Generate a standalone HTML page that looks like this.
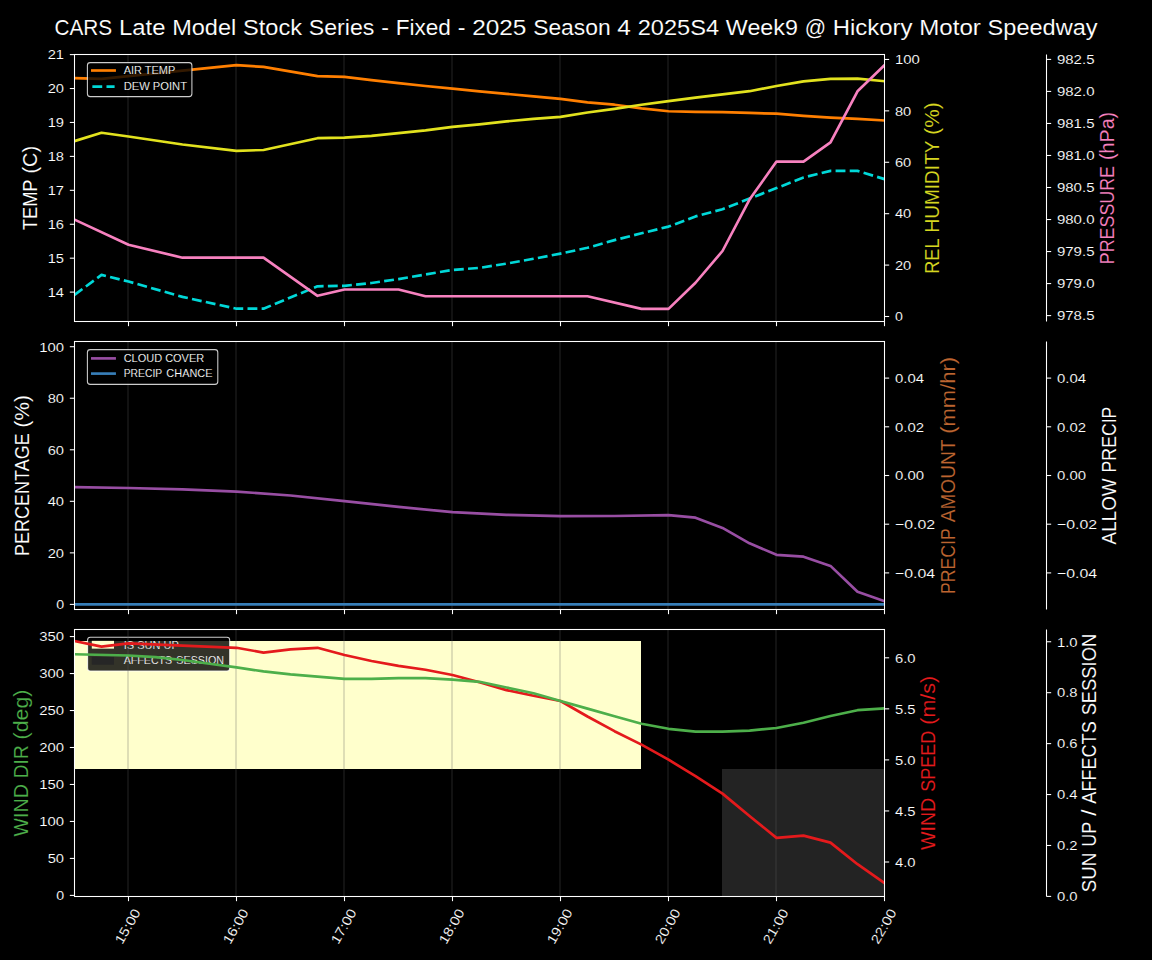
<!DOCTYPE html>
<html><head><meta charset="utf-8"><title>CARS Weather</title>
<style>html,body{margin:0;padding:0;background:#000;width:1152px;height:960px;overflow:hidden;font-family:"Liberation Sans", sans-serif;}</style>
</head><body>
<svg width="1152" height="960" viewBox="0 0 1152 960" style="display:block;font-family:'Liberation Sans', sans-serif">
<rect x="0" y="0" width="1152" height="960" fill="#000"/>
<defs><clipPath id="c1"><rect x="74.5" y="54.5" width="810.0" height="267.0"/></clipPath><clipPath id="c2"><rect x="74.5" y="341.5" width="810.0" height="268.0"/></clipPath><clipPath id="c3"><rect x="74.5" y="629.5" width="810.0" height="267.0"/></clipPath></defs>
<text x="54.39" y="35.30" font-size="22.61" fill="#ffffff" textLength="57.82" lengthAdjust="spacingAndGlyphs" stroke="#000" stroke-width="0.12">CARS</text>
<text x="119.00" y="35.30" font-size="22.61" fill="#ffffff" textLength="46.44" lengthAdjust="spacingAndGlyphs" stroke="#000" stroke-width="0.12">Late</text>
<text x="172.21" y="35.30" font-size="22.61" fill="#ffffff" textLength="64.03" lengthAdjust="spacingAndGlyphs" stroke="#000" stroke-width="0.12">Model</text>
<text x="243.01" y="35.30" font-size="22.61" fill="#ffffff" textLength="58.97" lengthAdjust="spacingAndGlyphs" stroke="#000" stroke-width="0.12">Stock</text>
<text x="308.81" y="35.30" font-size="22.61" fill="#ffffff" textLength="65.58" lengthAdjust="spacingAndGlyphs" stroke="#000" stroke-width="0.12">Series</text>
<text x="381.17" y="35.30" font-size="22.61" fill="#ffffff" textLength="7.70" lengthAdjust="spacingAndGlyphs" stroke="#000" stroke-width="0.12">-</text>
<text x="395.64" y="35.30" font-size="22.61" fill="#ffffff" textLength="55.24" lengthAdjust="spacingAndGlyphs" stroke="#000" stroke-width="0.12">Fixed</text>
<text x="457.68" y="35.30" font-size="22.61" fill="#ffffff" textLength="7.70" lengthAdjust="spacingAndGlyphs" stroke="#000" stroke-width="0.12">-</text>
<text x="472.15" y="35.30" font-size="22.61" fill="#ffffff" textLength="54.28" lengthAdjust="spacingAndGlyphs" stroke="#000" stroke-width="0.12">2025</text>
<text x="533.20" y="35.30" font-size="22.61" fill="#ffffff" textLength="77.40" lengthAdjust="spacingAndGlyphs" stroke="#000" stroke-width="0.12">Season</text>
<text x="617.37" y="35.30" font-size="22.61" fill="#ffffff" textLength="13.57" lengthAdjust="spacingAndGlyphs" stroke="#000" stroke-width="0.12">4</text>
<text x="637.72" y="35.30" font-size="22.61" fill="#ffffff" textLength="81.37" lengthAdjust="spacingAndGlyphs" stroke="#000" stroke-width="0.12">2025S4</text>
<text x="725.87" y="35.30" font-size="22.61" fill="#ffffff" textLength="72.01" lengthAdjust="spacingAndGlyphs" stroke="#000" stroke-width="0.12">Week9</text>
<text x="804.64" y="35.30" font-size="22.61" fill="#ffffff" textLength="21.32" lengthAdjust="spacingAndGlyphs" stroke="#000" stroke-width="0.12">@</text>
<text x="832.75" y="35.30" font-size="22.61" fill="#ffffff" textLength="79.69" lengthAdjust="spacingAndGlyphs" stroke="#000" stroke-width="0.12">Hickory</text>
<text x="919.23" y="35.30" font-size="22.61" fill="#ffffff" textLength="61.62" lengthAdjust="spacingAndGlyphs" stroke="#000" stroke-width="0.12">Motor</text>
<text x="987.63" y="35.30" font-size="22.61" fill="#ffffff" textLength="109.97" lengthAdjust="spacingAndGlyphs" stroke="#000" stroke-width="0.12">Speedway</text>
<line x1="128.00" y1="54.5" x2="128.00" y2="321.5" stroke="#5a5a5a" stroke-opacity="0.2" stroke-width="2"/>
<line x1="236.00" y1="54.5" x2="236.00" y2="321.5" stroke="#5a5a5a" stroke-opacity="0.2" stroke-width="2"/>
<line x1="344.00" y1="54.5" x2="344.00" y2="321.5" stroke="#5a5a5a" stroke-opacity="0.2" stroke-width="2"/>
<line x1="452.00" y1="54.5" x2="452.00" y2="321.5" stroke="#5a5a5a" stroke-opacity="0.2" stroke-width="2"/>
<line x1="560.00" y1="54.5" x2="560.00" y2="321.5" stroke="#5a5a5a" stroke-opacity="0.2" stroke-width="2"/>
<line x1="668.00" y1="54.5" x2="668.00" y2="321.5" stroke="#5a5a5a" stroke-opacity="0.2" stroke-width="2"/>
<line x1="776.00" y1="54.5" x2="776.00" y2="321.5" stroke="#5a5a5a" stroke-opacity="0.2" stroke-width="2"/>
<g clip-path="url(#c1)">
<polyline points="74.50,78.07 101.50,78.93 236.50,65.18 263.50,66.90 317.50,76.07 344.50,76.90 371.50,80.20 398.50,83.20 425.50,86.00 452.50,88.60 479.50,91.40 506.50,93.90 533.50,96.30 560.50,98.90 587.50,102.40 614.50,104.70 641.50,108.40 668.50,111.25 695.50,111.80 722.50,112.20 749.50,112.95 776.50,113.70 803.50,115.90 830.50,117.60 857.50,118.90 884.50,120.50" fill="none" stroke="#ff7f00" stroke-width="2.67" stroke-linejoin="round" stroke-linecap="square" opacity="1.0"/>
</g>
<g clip-path="url(#c1)">
<polyline points="74.50,294.90 101.50,274.90 128.50,281.50 182.50,296.90 236.50,308.70 263.50,308.70 317.50,286.30 344.50,285.80 371.50,283.00 398.50,279.10 425.50,274.50 452.50,269.90 479.50,267.90 506.50,263.60 533.50,258.80 560.50,253.60 587.50,247.80 614.50,240.10 641.50,233.30 668.50,226.60 695.50,216.40 722.50,209.20 749.50,198.60 776.50,188.10 803.50,177.50 830.50,170.90 857.50,170.90 884.50,179.10" fill="none" stroke="#00d8d8" stroke-width="2.67" stroke-linejoin="round" stroke-linecap="butt" stroke-dasharray="9.87 4.27" opacity="1.0"/>
</g>
<g clip-path="url(#c1)">
<polyline points="74.50,141.10 101.50,132.80 128.50,136.50 182.50,144.50 236.50,150.80 263.50,150.00 317.50,138.20 344.50,137.70 371.50,135.80 398.50,133.20 425.50,130.40 452.50,126.90 479.50,124.40 506.50,121.40 533.50,118.80 560.50,116.85 587.50,112.55 614.50,108.90 641.50,104.70 668.50,101.10 695.50,97.60 722.50,94.30 749.50,91.20 776.50,86.00 803.50,81.40 830.50,78.80 857.50,78.60 884.50,81.20" fill="none" stroke="#e2e21e" stroke-width="2.67" stroke-linejoin="round" stroke-linecap="square" opacity="1.0"/>
</g>
<g clip-path="url(#c1)">
<polyline points="74.50,219.60 128.50,244.80 182.50,257.70 263.50,257.70 317.50,295.80 344.50,289.50 398.50,289.50 425.50,296.25 587.50,296.25 641.50,308.90 668.50,308.90 695.50,282.75 722.50,251.00 749.50,199.60 776.50,161.60 803.50,161.60 830.50,142.30 857.50,91.30 884.50,65.20" fill="none" stroke="#f781bf" stroke-width="2.67" stroke-linejoin="round" stroke-linecap="square" opacity="1.0"/>
</g>
<rect x="74.5" y="54.5" width="810.0" height="267.0" fill="none" stroke="#fff" stroke-width="1.07"/>
<line x1="1046.5" y1="54.5" x2="1046.5" y2="321.5" stroke="#fff" stroke-width="1.07"/>
<line x1="128.5" y1="321.5" x2="128.5" y2="326.17" stroke="#fff" stroke-width="1.07"/>
<line x1="236.5" y1="321.5" x2="236.5" y2="326.17" stroke="#fff" stroke-width="1.07"/>
<line x1="344.5" y1="321.5" x2="344.5" y2="326.17" stroke="#fff" stroke-width="1.07"/>
<line x1="452.5" y1="321.5" x2="452.5" y2="326.17" stroke="#fff" stroke-width="1.07"/>
<line x1="560.5" y1="321.5" x2="560.5" y2="326.17" stroke="#fff" stroke-width="1.07"/>
<line x1="668.5" y1="321.5" x2="668.5" y2="326.17" stroke="#fff" stroke-width="1.07"/>
<line x1="776.5" y1="321.5" x2="776.5" y2="326.17" stroke="#fff" stroke-width="1.07"/>
<line x1="884.5" y1="321.5" x2="884.5" y2="326.17" stroke="#fff" stroke-width="1.07"/>
<line x1="69.83" y1="292.11" x2="74.5" y2="292.11" stroke="#fff" stroke-width="1.07"/>
<text x="47.70" y="296.91" font-size="13.33" fill="#ffffff" textLength="16.35" lengthAdjust="spacingAndGlyphs" stroke="#000" stroke-width="0.12">14</text>
<line x1="69.83" y1="258.18" x2="74.5" y2="258.18" stroke="#fff" stroke-width="1.07"/>
<text x="47.70" y="262.98" font-size="13.33" fill="#ffffff" textLength="16.35" lengthAdjust="spacingAndGlyphs" stroke="#000" stroke-width="0.12">15</text>
<line x1="69.83" y1="224.25" x2="74.5" y2="224.25" stroke="#fff" stroke-width="1.07"/>
<text x="47.70" y="229.05" font-size="13.33" fill="#ffffff" textLength="16.35" lengthAdjust="spacingAndGlyphs" stroke="#000" stroke-width="0.12">16</text>
<line x1="69.83" y1="190.32" x2="74.5" y2="190.32" stroke="#fff" stroke-width="1.07"/>
<text x="47.70" y="195.12" font-size="13.33" fill="#ffffff" textLength="16.35" lengthAdjust="spacingAndGlyphs" stroke="#000" stroke-width="0.12">17</text>
<line x1="69.83" y1="156.39" x2="74.5" y2="156.39" stroke="#fff" stroke-width="1.07"/>
<text x="47.70" y="161.19" font-size="13.33" fill="#ffffff" textLength="16.35" lengthAdjust="spacingAndGlyphs" stroke="#000" stroke-width="0.12">18</text>
<line x1="69.83" y1="122.46" x2="74.5" y2="122.46" stroke="#fff" stroke-width="1.07"/>
<text x="47.70" y="127.26" font-size="13.33" fill="#ffffff" textLength="16.35" lengthAdjust="spacingAndGlyphs" stroke="#000" stroke-width="0.12">19</text>
<line x1="69.83" y1="88.53" x2="74.5" y2="88.53" stroke="#fff" stroke-width="1.07"/>
<text x="47.70" y="93.33" font-size="13.33" fill="#ffffff" textLength="16.35" lengthAdjust="spacingAndGlyphs" stroke="#000" stroke-width="0.12">20</text>
<line x1="69.83" y1="54.60" x2="74.5" y2="54.60" stroke="#fff" stroke-width="1.07"/>
<text x="47.70" y="59.40" font-size="13.33" fill="#ffffff" textLength="16.35" lengthAdjust="spacingAndGlyphs" stroke="#000" stroke-width="0.12">21</text>
<line x1="884.5" y1="316.50" x2="889.17" y2="316.50" stroke="#fff" stroke-width="1.07"/>
<text x="894.94" y="321.30" font-size="13.33" fill="#ffffff" textLength="7.89" lengthAdjust="spacingAndGlyphs" stroke="#000" stroke-width="0.12">0</text>
<line x1="884.5" y1="265.09" x2="889.17" y2="265.09" stroke="#fff" stroke-width="1.07"/>
<text x="894.94" y="269.89" font-size="13.33" fill="#ffffff" textLength="16.35" lengthAdjust="spacingAndGlyphs" stroke="#000" stroke-width="0.12">20</text>
<line x1="884.5" y1="213.68" x2="889.17" y2="213.68" stroke="#fff" stroke-width="1.07"/>
<text x="894.94" y="218.48" font-size="13.33" fill="#ffffff" textLength="16.35" lengthAdjust="spacingAndGlyphs" stroke="#000" stroke-width="0.12">40</text>
<line x1="884.5" y1="162.27" x2="889.17" y2="162.27" stroke="#fff" stroke-width="1.07"/>
<text x="894.94" y="167.07" font-size="13.33" fill="#ffffff" textLength="16.35" lengthAdjust="spacingAndGlyphs" stroke="#000" stroke-width="0.12">60</text>
<line x1="884.5" y1="110.86" x2="889.17" y2="110.86" stroke="#fff" stroke-width="1.07"/>
<text x="894.94" y="115.66" font-size="13.33" fill="#ffffff" textLength="16.35" lengthAdjust="spacingAndGlyphs" stroke="#000" stroke-width="0.12">80</text>
<line x1="884.5" y1="59.45" x2="889.17" y2="59.45" stroke="#fff" stroke-width="1.07"/>
<text x="894.94" y="64.25" font-size="13.33" fill="#ffffff" textLength="24.83" lengthAdjust="spacingAndGlyphs" stroke="#000" stroke-width="0.12">100</text>
<line x1="1046.5" y1="315.60" x2="1051.17" y2="315.60" stroke="#fff" stroke-width="1.07"/>
<text x="1056.94" y="320.40" font-size="13.33" fill="#ffffff" textLength="37.54" lengthAdjust="spacingAndGlyphs" stroke="#000" stroke-width="0.12">978.5</text>
<line x1="1046.5" y1="283.57" x2="1051.17" y2="283.57" stroke="#fff" stroke-width="1.07"/>
<text x="1056.94" y="288.38" font-size="13.33" fill="#ffffff" textLength="37.54" lengthAdjust="spacingAndGlyphs" stroke="#000" stroke-width="0.12">979.0</text>
<line x1="1046.5" y1="251.55" x2="1051.17" y2="251.55" stroke="#fff" stroke-width="1.07"/>
<text x="1056.94" y="256.35" font-size="13.33" fill="#ffffff" textLength="37.54" lengthAdjust="spacingAndGlyphs" stroke="#000" stroke-width="0.12">979.5</text>
<line x1="1046.5" y1="219.53" x2="1051.17" y2="219.53" stroke="#fff" stroke-width="1.07"/>
<text x="1056.94" y="224.33" font-size="13.33" fill="#ffffff" textLength="37.54" lengthAdjust="spacingAndGlyphs" stroke="#000" stroke-width="0.12">980.0</text>
<line x1="1046.5" y1="187.50" x2="1051.17" y2="187.50" stroke="#fff" stroke-width="1.07"/>
<text x="1056.94" y="192.30" font-size="13.33" fill="#ffffff" textLength="37.54" lengthAdjust="spacingAndGlyphs" stroke="#000" stroke-width="0.12">980.5</text>
<line x1="1046.5" y1="155.47" x2="1051.17" y2="155.47" stroke="#fff" stroke-width="1.07"/>
<text x="1056.94" y="160.28" font-size="13.33" fill="#ffffff" textLength="37.54" lengthAdjust="spacingAndGlyphs" stroke="#000" stroke-width="0.12">981.0</text>
<line x1="1046.5" y1="123.45" x2="1051.17" y2="123.45" stroke="#fff" stroke-width="1.07"/>
<text x="1056.94" y="128.25" font-size="13.33" fill="#ffffff" textLength="37.54" lengthAdjust="spacingAndGlyphs" stroke="#000" stroke-width="0.12">981.5</text>
<line x1="1046.5" y1="91.42" x2="1051.17" y2="91.42" stroke="#fff" stroke-width="1.07"/>
<text x="1056.94" y="96.22" font-size="13.33" fill="#ffffff" textLength="37.54" lengthAdjust="spacingAndGlyphs" stroke="#000" stroke-width="0.12">982.0</text>
<line x1="1046.5" y1="59.40" x2="1051.17" y2="59.40" stroke="#fff" stroke-width="1.07"/>
<text x="1056.94" y="64.20" font-size="13.33" fill="#ffffff" textLength="37.54" lengthAdjust="spacingAndGlyphs" stroke="#000" stroke-width="0.12">982.5</text>
<text x="-42.14" y="0.00" font-size="19.79" fill="#ffffff" textLength="50.65" lengthAdjust="spacingAndGlyphs" stroke="#000" stroke-width="0.12" transform="translate(36.90,188.00) rotate(-90)">TEMP</text>
<text x="14.45" y="0.00" font-size="19.79" fill="#ffffff" textLength="27.61" lengthAdjust="spacingAndGlyphs" stroke="#000" stroke-width="0.12" transform="translate(36.90,188.00) rotate(-90)">(C)</text>
<text x="-85.70" y="0.00" font-size="19.79" fill="#d6d620" textLength="35.17" lengthAdjust="spacingAndGlyphs" stroke="#000" stroke-width="0.12" transform="translate(939.00,188.00) rotate(-90)">REL</text>
<text x="-44.59" y="0.00" font-size="19.79" fill="#d6d620" textLength="92.07" lengthAdjust="spacingAndGlyphs" stroke="#000" stroke-width="0.12" transform="translate(939.00,188.00) rotate(-90)">HUMIDITY</text>
<text x="53.38" y="0.00" font-size="19.79" fill="#d6d620" textLength="32.32" lengthAdjust="spacingAndGlyphs" stroke="#000" stroke-width="0.12" transform="translate(939.00,188.00) rotate(-90)">(%)</text>
<text x="-76.20" y="0.00" font-size="19.79" fill="#f781bf" textLength="98.20" lengthAdjust="spacingAndGlyphs" stroke="#000" stroke-width="0.12" transform="translate(1114.00,188.00) rotate(-90)">PRESSURE</text>
<text x="27.93" y="0.00" font-size="19.79" fill="#f781bf" textLength="48.27" lengthAdjust="spacingAndGlyphs" stroke="#000" stroke-width="0.12" transform="translate(1114.00,188.00) rotate(-90)">(hPa)</text>
<rect x="87.4" y="62.6" width="104.50" height="34.00" rx="2.8" ry="2.8" fill="#000" fill-opacity="0.8" stroke="#fff" stroke-opacity="0.8" stroke-width="1.07"/>
<line x1="92.35" y1="70.5" x2="114.6" y2="70.5" stroke="#ff7f00" stroke-width="2.67" stroke-linecap="square"/>
<line x1="92.35" y1="86.6" x2="114.6" y2="86.6" stroke="#00d8d8" stroke-width="2.67" stroke-dasharray="9.87 4.27"/>
<text x="123.70" y="73.80" font-size="11.11" fill="#ffffff" textLength="51.57" lengthAdjust="spacingAndGlyphs" stroke="#000" stroke-width="0.12">AIR TEMP</text>
<text x="123.70" y="89.80" font-size="11.11" fill="#ffffff" textLength="63.30" lengthAdjust="spacingAndGlyphs" stroke="#000" stroke-width="0.12">DEW POINT</text>
<line x1="128.00" y1="341.5" x2="128.00" y2="609.5" stroke="#5a5a5a" stroke-opacity="0.2" stroke-width="2"/>
<line x1="236.00" y1="341.5" x2="236.00" y2="609.5" stroke="#5a5a5a" stroke-opacity="0.2" stroke-width="2"/>
<line x1="344.00" y1="341.5" x2="344.00" y2="609.5" stroke="#5a5a5a" stroke-opacity="0.2" stroke-width="2"/>
<line x1="452.00" y1="341.5" x2="452.00" y2="609.5" stroke="#5a5a5a" stroke-opacity="0.2" stroke-width="2"/>
<line x1="560.00" y1="341.5" x2="560.00" y2="609.5" stroke="#5a5a5a" stroke-opacity="0.2" stroke-width="2"/>
<line x1="668.00" y1="341.5" x2="668.00" y2="609.5" stroke="#5a5a5a" stroke-opacity="0.2" stroke-width="2"/>
<line x1="776.00" y1="341.5" x2="776.00" y2="609.5" stroke="#5a5a5a" stroke-opacity="0.2" stroke-width="2"/>
<g clip-path="url(#c2)">
<polyline points="74.50,487.20 128.50,488.00 182.50,489.30 236.50,491.60 290.50,495.50 344.50,501.20 398.50,506.80 452.50,512.20 506.50,514.80 560.50,516.10 614.50,516.00 668.50,515.20 695.50,517.70 722.50,527.90 749.50,543.30 776.50,554.80 803.50,556.70 830.50,565.90 857.50,591.70 884.50,601.20" fill="none" stroke="#984ea3" stroke-width="2.67" stroke-linejoin="round" stroke-linecap="square" opacity="1.0"/>
</g>
<g clip-path="url(#c2)">
<polyline points="74.50,604.40 884.50,604.40" fill="none" stroke="#377eb8" stroke-width="2.67" stroke-linejoin="round" stroke-linecap="square" opacity="1.0"/>
</g>
<rect x="74.5" y="341.5" width="810.0" height="268.0" fill="none" stroke="#fff" stroke-width="1.07"/>
<line x1="1046.5" y1="341.5" x2="1046.5" y2="609.5" stroke="#fff" stroke-width="1.07"/>
<line x1="128.5" y1="609.5" x2="128.5" y2="614.17" stroke="#fff" stroke-width="1.07"/>
<line x1="236.5" y1="609.5" x2="236.5" y2="614.17" stroke="#fff" stroke-width="1.07"/>
<line x1="344.5" y1="609.5" x2="344.5" y2="614.17" stroke="#fff" stroke-width="1.07"/>
<line x1="452.5" y1="609.5" x2="452.5" y2="614.17" stroke="#fff" stroke-width="1.07"/>
<line x1="560.5" y1="609.5" x2="560.5" y2="614.17" stroke="#fff" stroke-width="1.07"/>
<line x1="668.5" y1="609.5" x2="668.5" y2="614.17" stroke="#fff" stroke-width="1.07"/>
<line x1="776.5" y1="609.5" x2="776.5" y2="614.17" stroke="#fff" stroke-width="1.07"/>
<line x1="884.5" y1="609.5" x2="884.5" y2="614.17" stroke="#fff" stroke-width="1.07"/>
<line x1="69.83" y1="604.40" x2="74.5" y2="604.40" stroke="#fff" stroke-width="1.07"/>
<text x="56.18" y="609.20" font-size="13.33" fill="#ffffff" textLength="7.89" lengthAdjust="spacingAndGlyphs" stroke="#000" stroke-width="0.12">0</text>
<line x1="69.83" y1="552.86" x2="74.5" y2="552.86" stroke="#fff" stroke-width="1.07"/>
<text x="47.70" y="557.66" font-size="13.33" fill="#ffffff" textLength="16.35" lengthAdjust="spacingAndGlyphs" stroke="#000" stroke-width="0.12">20</text>
<line x1="69.83" y1="501.32" x2="74.5" y2="501.32" stroke="#fff" stroke-width="1.07"/>
<text x="47.70" y="506.12" font-size="13.33" fill="#ffffff" textLength="16.35" lengthAdjust="spacingAndGlyphs" stroke="#000" stroke-width="0.12">40</text>
<line x1="69.83" y1="449.78" x2="74.5" y2="449.78" stroke="#fff" stroke-width="1.07"/>
<text x="47.70" y="454.58" font-size="13.33" fill="#ffffff" textLength="16.35" lengthAdjust="spacingAndGlyphs" stroke="#000" stroke-width="0.12">60</text>
<line x1="69.83" y1="398.24" x2="74.5" y2="398.24" stroke="#fff" stroke-width="1.07"/>
<text x="47.70" y="403.04" font-size="13.33" fill="#ffffff" textLength="16.35" lengthAdjust="spacingAndGlyphs" stroke="#000" stroke-width="0.12">80</text>
<line x1="69.83" y1="346.70" x2="74.5" y2="346.70" stroke="#fff" stroke-width="1.07"/>
<text x="39.23" y="351.50" font-size="13.33" fill="#ffffff" textLength="24.83" lengthAdjust="spacingAndGlyphs" stroke="#000" stroke-width="0.12">100</text>
<line x1="884.5" y1="572.90" x2="889.17" y2="572.90" stroke="#fff" stroke-width="1.07"/>
<text x="894.94" y="577.70" font-size="13.33" fill="#ffffff" textLength="40.21" lengthAdjust="spacingAndGlyphs" stroke="#000" stroke-width="0.12">−0.04</text>
<line x1="884.5" y1="524.20" x2="889.17" y2="524.20" stroke="#fff" stroke-width="1.07"/>
<text x="894.94" y="529.00" font-size="13.33" fill="#ffffff" textLength="40.21" lengthAdjust="spacingAndGlyphs" stroke="#000" stroke-width="0.12">−0.02</text>
<line x1="884.5" y1="475.50" x2="889.17" y2="475.50" stroke="#fff" stroke-width="1.07"/>
<text x="894.94" y="480.30" font-size="13.33" fill="#ffffff" textLength="29.08" lengthAdjust="spacingAndGlyphs" stroke="#000" stroke-width="0.12">0.00</text>
<line x1="884.5" y1="426.80" x2="889.17" y2="426.80" stroke="#fff" stroke-width="1.07"/>
<text x="894.94" y="431.60" font-size="13.33" fill="#ffffff" textLength="29.08" lengthAdjust="spacingAndGlyphs" stroke="#000" stroke-width="0.12">0.02</text>
<line x1="884.5" y1="378.10" x2="889.17" y2="378.10" stroke="#fff" stroke-width="1.07"/>
<text x="894.94" y="382.90" font-size="13.33" fill="#ffffff" textLength="29.08" lengthAdjust="spacingAndGlyphs" stroke="#000" stroke-width="0.12">0.04</text>
<line x1="1046.5" y1="572.90" x2="1051.17" y2="572.90" stroke="#fff" stroke-width="1.07"/>
<text x="1056.94" y="577.70" font-size="13.33" fill="#ffffff" textLength="40.21" lengthAdjust="spacingAndGlyphs" stroke="#000" stroke-width="0.12">−0.04</text>
<line x1="1046.5" y1="524.20" x2="1051.17" y2="524.20" stroke="#fff" stroke-width="1.07"/>
<text x="1056.94" y="529.00" font-size="13.33" fill="#ffffff" textLength="40.21" lengthAdjust="spacingAndGlyphs" stroke="#000" stroke-width="0.12">−0.02</text>
<line x1="1046.5" y1="475.50" x2="1051.17" y2="475.50" stroke="#fff" stroke-width="1.07"/>
<text x="1056.94" y="480.30" font-size="13.33" fill="#ffffff" textLength="29.08" lengthAdjust="spacingAndGlyphs" stroke="#000" stroke-width="0.12">0.00</text>
<line x1="1046.5" y1="426.80" x2="1051.17" y2="426.80" stroke="#fff" stroke-width="1.07"/>
<text x="1056.94" y="431.60" font-size="13.33" fill="#ffffff" textLength="29.08" lengthAdjust="spacingAndGlyphs" stroke="#000" stroke-width="0.12">0.02</text>
<line x1="1046.5" y1="378.10" x2="1051.17" y2="378.10" stroke="#fff" stroke-width="1.07"/>
<text x="1056.94" y="382.90" font-size="13.33" fill="#ffffff" textLength="29.08" lengthAdjust="spacingAndGlyphs" stroke="#000" stroke-width="0.12">0.04</text>
<text x="-80.42" y="0.00" font-size="19.79" fill="#ffffff" textLength="122.61" lengthAdjust="spacingAndGlyphs" stroke="#000" stroke-width="0.12" transform="translate(29.00,475.50) rotate(-90)">PERCENTAGE</text>
<text x="48.11" y="0.00" font-size="19.79" fill="#ffffff" textLength="32.32" lengthAdjust="spacingAndGlyphs" stroke="#000" stroke-width="0.12" transform="translate(29.00,475.50) rotate(-90)">(%)</text>
<text x="-118.56" y="0.00" font-size="19.79" fill="#bd6530" textLength="65.84" lengthAdjust="spacingAndGlyphs" stroke="#000" stroke-width="0.12" transform="translate(955.00,475.50) rotate(-90)">PRECIP</text>
<text x="-46.77" y="0.00" font-size="19.79" fill="#bd6530" textLength="82.69" lengthAdjust="spacingAndGlyphs" stroke="#000" stroke-width="0.12" transform="translate(955.00,475.50) rotate(-90)">AMOUNT</text>
<text x="41.80" y="0.00" font-size="19.79" fill="#bd6530" textLength="76.76" lengthAdjust="spacingAndGlyphs" stroke="#000" stroke-width="0.12" transform="translate(955.00,475.50) rotate(-90)">(mm/hr)</text>
<text x="-68.93" y="0.00" font-size="19.79" fill="#ffffff" textLength="66.07" lengthAdjust="spacingAndGlyphs" stroke="#000" stroke-width="0.12" transform="translate(1116.20,475.50) rotate(-90)">ALLOW</text>
<text x="3.09" y="0.00" font-size="19.79" fill="#ffffff" textLength="65.84" lengthAdjust="spacingAndGlyphs" stroke="#000" stroke-width="0.12" transform="translate(1116.20,475.50) rotate(-90)">PRECIP</text>
<rect x="87.4" y="349.6" width="130.40" height="34.80" rx="2.8" ry="2.8" fill="#000" fill-opacity="0.8" stroke="#fff" stroke-opacity="0.8" stroke-width="1.07"/>
<line x1="92.35" y1="358.4" x2="114.6" y2="358.4" stroke="#984ea3" stroke-width="2.67" stroke-linecap="square"/>
<line x1="92.35" y1="373.6" x2="114.6" y2="373.6" stroke="#377eb8" stroke-width="2.67" stroke-linecap="square"/>
<text x="123.70" y="362.00" font-size="11.11" fill="#ffffff" textLength="80.49" lengthAdjust="spacingAndGlyphs" stroke="#000" stroke-width="0.12">CLOUD COVER</text>
<text x="123.70" y="377.10" font-size="11.11" fill="#ffffff" textLength="38.55" lengthAdjust="spacingAndGlyphs" stroke="#000" stroke-width="0.12">PRECIP</text>
<text x="166.37" y="377.10" font-size="11.11" fill="#ffffff" textLength="46.15" lengthAdjust="spacingAndGlyphs" stroke="#000" stroke-width="0.12">CHANCE</text>
<rect x="74" y="641" width="567" height="128" fill="#ffffcc"/>
<rect x="722" y="769" width="162.5" height="127.50" fill="#232323"/>
<rect x="87.6" y="637.2" width="142.10" height="33.80" rx="2.8" ry="2.8" fill="#000" fill-opacity="0.8" stroke="#fff" stroke-opacity="0.8" stroke-width="1.07"/>
<rect x="91.8" y="640.85" width="22.2" height="7.8" fill="#ffffcc"/>
<rect x="91.8" y="656.9" width="22.2" height="7.8" fill="#262626"/>
<text x="123.80" y="648.75" font-size="11.11" fill="#ffffff" textLength="55.09" lengthAdjust="spacingAndGlyphs" stroke="#000" stroke-width="0.12">IS SUN UP</text>
<text x="123.80" y="664.30" font-size="11.11" fill="#ffffff" textLength="48.34" lengthAdjust="spacingAndGlyphs" stroke="#000" stroke-width="0.12">AFFECTS</text>
<text x="176.28" y="664.30" font-size="11.11" fill="#ffffff" textLength="47.87" lengthAdjust="spacingAndGlyphs" stroke="#000" stroke-width="0.12">SESSION</text>
<line x1="128.00" y1="629.5" x2="128.00" y2="896.5" stroke="#5a5a5a" stroke-opacity="0.2" stroke-width="2"/>
<line x1="236.00" y1="629.5" x2="236.00" y2="896.5" stroke="#5a5a5a" stroke-opacity="0.2" stroke-width="2"/>
<line x1="344.00" y1="629.5" x2="344.00" y2="896.5" stroke="#5a5a5a" stroke-opacity="0.2" stroke-width="2"/>
<line x1="452.00" y1="629.5" x2="452.00" y2="896.5" stroke="#5a5a5a" stroke-opacity="0.2" stroke-width="2"/>
<line x1="560.00" y1="629.5" x2="560.00" y2="896.5" stroke="#5a5a5a" stroke-opacity="0.2" stroke-width="2"/>
<line x1="668.00" y1="629.5" x2="668.00" y2="896.5" stroke="#5a5a5a" stroke-opacity="0.2" stroke-width="2"/>
<line x1="776.00" y1="629.5" x2="776.00" y2="896.5" stroke="#5a5a5a" stroke-opacity="0.2" stroke-width="2"/>
<g clip-path="url(#c3)">
<polyline points="74.50,641.00 101.50,646.60 128.50,643.30 236.50,647.80 263.50,652.60 290.50,649.30 317.50,647.80 344.50,655.00 371.50,661.00 398.50,665.90 425.50,669.80 452.50,675.00 479.50,682.30 506.50,690.10 533.50,695.80 560.50,701.00 587.50,716.50 614.50,731.20 641.50,744.60 668.50,759.70 695.50,776.10 722.50,793.60 749.50,816.00 776.50,837.90 803.50,835.60 830.50,842.60 857.50,864.20 884.50,883.10" fill="none" stroke="#e41a1c" stroke-width="2.67" stroke-linejoin="round" stroke-linecap="square" opacity="1.0"/>
</g>
<g clip-path="url(#c3)">
<polyline points="74.50,654.30 128.50,655.50 155.50,657.20 182.50,660.00 209.50,663.80 236.50,667.40 263.50,671.40 290.50,674.40 344.50,678.90 371.50,678.90 398.50,678.10 425.50,678.10 452.50,679.70 479.50,681.80 506.50,687.50 533.50,693.20 560.50,701.00 587.50,708.60 614.50,716.20 641.50,723.80 668.50,728.80 695.50,731.70 722.50,731.70 749.50,730.60 776.50,728.00 803.50,722.70 830.50,716.00 857.50,710.20 884.50,708.40" fill="none" stroke="#4daf4a" stroke-width="2.67" stroke-linejoin="round" stroke-linecap="square" opacity="1.0"/>
</g>
<rect x="74.5" y="629.5" width="810.0" height="267.0" fill="none" stroke="#fff" stroke-width="1.07"/>
<line x1="1046.5" y1="629.5" x2="1046.5" y2="896.5" stroke="#fff" stroke-width="1.07"/>
<line x1="128.5" y1="896.5" x2="128.5" y2="901.17" stroke="#fff" stroke-width="1.07"/>
<line x1="236.5" y1="896.5" x2="236.5" y2="901.17" stroke="#fff" stroke-width="1.07"/>
<line x1="344.5" y1="896.5" x2="344.5" y2="901.17" stroke="#fff" stroke-width="1.07"/>
<line x1="452.5" y1="896.5" x2="452.5" y2="901.17" stroke="#fff" stroke-width="1.07"/>
<line x1="560.5" y1="896.5" x2="560.5" y2="901.17" stroke="#fff" stroke-width="1.07"/>
<line x1="668.5" y1="896.5" x2="668.5" y2="901.17" stroke="#fff" stroke-width="1.07"/>
<line x1="776.5" y1="896.5" x2="776.5" y2="901.17" stroke="#fff" stroke-width="1.07"/>
<line x1="884.5" y1="896.5" x2="884.5" y2="901.17" stroke="#fff" stroke-width="1.07"/>
<line x1="69.83" y1="895.40" x2="74.5" y2="895.40" stroke="#fff" stroke-width="1.07"/>
<text x="56.18" y="900.20" font-size="13.33" fill="#ffffff" textLength="7.89" lengthAdjust="spacingAndGlyphs" stroke="#000" stroke-width="0.12">0</text>
<line x1="69.83" y1="858.42" x2="74.5" y2="858.42" stroke="#fff" stroke-width="1.07"/>
<text x="47.70" y="863.22" font-size="13.33" fill="#ffffff" textLength="16.35" lengthAdjust="spacingAndGlyphs" stroke="#000" stroke-width="0.12">50</text>
<line x1="69.83" y1="821.45" x2="74.5" y2="821.45" stroke="#fff" stroke-width="1.07"/>
<text x="39.23" y="826.25" font-size="13.33" fill="#ffffff" textLength="24.83" lengthAdjust="spacingAndGlyphs" stroke="#000" stroke-width="0.12">100</text>
<line x1="69.83" y1="784.47" x2="74.5" y2="784.47" stroke="#fff" stroke-width="1.07"/>
<text x="39.23" y="789.27" font-size="13.33" fill="#ffffff" textLength="24.83" lengthAdjust="spacingAndGlyphs" stroke="#000" stroke-width="0.12">150</text>
<line x1="69.83" y1="747.50" x2="74.5" y2="747.50" stroke="#fff" stroke-width="1.07"/>
<text x="39.23" y="752.30" font-size="13.33" fill="#ffffff" textLength="24.83" lengthAdjust="spacingAndGlyphs" stroke="#000" stroke-width="0.12">200</text>
<line x1="69.83" y1="710.52" x2="74.5" y2="710.52" stroke="#fff" stroke-width="1.07"/>
<text x="39.23" y="715.32" font-size="13.33" fill="#ffffff" textLength="24.83" lengthAdjust="spacingAndGlyphs" stroke="#000" stroke-width="0.12">250</text>
<line x1="69.83" y1="673.55" x2="74.5" y2="673.55" stroke="#fff" stroke-width="1.07"/>
<text x="39.23" y="678.35" font-size="13.33" fill="#ffffff" textLength="24.83" lengthAdjust="spacingAndGlyphs" stroke="#000" stroke-width="0.12">300</text>
<line x1="69.83" y1="636.58" x2="74.5" y2="636.58" stroke="#fff" stroke-width="1.07"/>
<text x="39.23" y="641.38" font-size="13.33" fill="#ffffff" textLength="24.83" lengthAdjust="spacingAndGlyphs" stroke="#000" stroke-width="0.12">350</text>
<line x1="884.5" y1="862.00" x2="889.17" y2="862.00" stroke="#fff" stroke-width="1.07"/>
<text x="894.94" y="866.80" font-size="13.33" fill="#ffffff" textLength="20.60" lengthAdjust="spacingAndGlyphs" stroke="#000" stroke-width="0.12">4.0</text>
<line x1="884.5" y1="810.95" x2="889.17" y2="810.95" stroke="#fff" stroke-width="1.07"/>
<text x="894.94" y="815.75" font-size="13.33" fill="#ffffff" textLength="20.60" lengthAdjust="spacingAndGlyphs" stroke="#000" stroke-width="0.12">4.5</text>
<line x1="884.5" y1="759.90" x2="889.17" y2="759.90" stroke="#fff" stroke-width="1.07"/>
<text x="894.94" y="764.70" font-size="13.33" fill="#ffffff" textLength="20.60" lengthAdjust="spacingAndGlyphs" stroke="#000" stroke-width="0.12">5.0</text>
<line x1="884.5" y1="708.85" x2="889.17" y2="708.85" stroke="#fff" stroke-width="1.07"/>
<text x="894.94" y="713.65" font-size="13.33" fill="#ffffff" textLength="20.60" lengthAdjust="spacingAndGlyphs" stroke="#000" stroke-width="0.12">5.5</text>
<line x1="884.5" y1="657.80" x2="889.17" y2="657.80" stroke="#fff" stroke-width="1.07"/>
<text x="894.94" y="662.60" font-size="13.33" fill="#ffffff" textLength="20.60" lengthAdjust="spacingAndGlyphs" stroke="#000" stroke-width="0.12">6.0</text>
<line x1="1046.5" y1="896.40" x2="1051.17" y2="896.40" stroke="#fff" stroke-width="1.07"/>
<text x="1056.94" y="901.20" font-size="13.33" fill="#ffffff" textLength="20.60" lengthAdjust="spacingAndGlyphs" stroke="#000" stroke-width="0.12">0.0</text>
<line x1="1046.5" y1="845.47" x2="1051.17" y2="845.47" stroke="#fff" stroke-width="1.07"/>
<text x="1056.94" y="850.27" font-size="13.33" fill="#ffffff" textLength="20.60" lengthAdjust="spacingAndGlyphs" stroke="#000" stroke-width="0.12">0.2</text>
<line x1="1046.5" y1="794.54" x2="1051.17" y2="794.54" stroke="#fff" stroke-width="1.07"/>
<text x="1056.94" y="799.34" font-size="13.33" fill="#ffffff" textLength="20.60" lengthAdjust="spacingAndGlyphs" stroke="#000" stroke-width="0.12">0.4</text>
<line x1="1046.5" y1="743.61" x2="1051.17" y2="743.61" stroke="#fff" stroke-width="1.07"/>
<text x="1056.94" y="748.41" font-size="13.33" fill="#ffffff" textLength="20.60" lengthAdjust="spacingAndGlyphs" stroke="#000" stroke-width="0.12">0.6</text>
<line x1="1046.5" y1="692.68" x2="1051.17" y2="692.68" stroke="#fff" stroke-width="1.07"/>
<text x="1056.94" y="697.48" font-size="13.33" fill="#ffffff" textLength="20.60" lengthAdjust="spacingAndGlyphs" stroke="#000" stroke-width="0.12">0.8</text>
<line x1="1046.5" y1="641.75" x2="1051.17" y2="641.75" stroke="#fff" stroke-width="1.07"/>
<text x="1056.94" y="646.55" font-size="13.33" fill="#ffffff" textLength="20.60" lengthAdjust="spacingAndGlyphs" stroke="#000" stroke-width="0.12">1.0</text>
<text x="-73.41" y="0.00" font-size="19.79" fill="#4daf4a" textLength="52.34" lengthAdjust="spacingAndGlyphs" stroke="#000" stroke-width="0.12" transform="translate(27.90,763.00) rotate(-90)">WIND</text>
<text x="-15.16" y="0.00" font-size="19.79" fill="#4daf4a" textLength="32.87" lengthAdjust="spacingAndGlyphs" stroke="#000" stroke-width="0.12" transform="translate(27.90,763.00) rotate(-90)">DIR</text>
<text x="23.64" y="0.00" font-size="19.79" fill="#4daf4a" textLength="49.77" lengthAdjust="spacingAndGlyphs" stroke="#000" stroke-width="0.12" transform="translate(27.90,763.00) rotate(-90)">(deg)</text>
<text x="-87.04" y="0.00" font-size="19.79" fill="#e41a1c" textLength="52.34" lengthAdjust="spacingAndGlyphs" stroke="#000" stroke-width="0.12" transform="translate(935.00,763.00) rotate(-90)">WIND</text>
<text x="-28.78" y="0.00" font-size="19.79" fill="#e41a1c" textLength="61.10" lengthAdjust="spacingAndGlyphs" stroke="#000" stroke-width="0.12" transform="translate(935.00,763.00) rotate(-90)">SPEED</text>
<text x="38.25" y="0.00" font-size="19.79" fill="#e41a1c" textLength="48.78" lengthAdjust="spacingAndGlyphs" stroke="#000" stroke-width="0.12" transform="translate(935.00,763.00) rotate(-90)">(m/s)</text>
<text x="-129.18" y="0.00" font-size="19.79" fill="#ffffff" textLength="39.50" lengthAdjust="spacingAndGlyphs" stroke="#000" stroke-width="0.12" transform="translate(1096.00,763.00) rotate(-90)">SUN</text>
<text x="-83.75" y="0.00" font-size="19.79" fill="#ffffff" textLength="24.93" lengthAdjust="spacingAndGlyphs" stroke="#000" stroke-width="0.12" transform="translate(1096.00,763.00) rotate(-90)">UP</text>
<text x="-52.88" y="0.00" font-size="19.79" fill="#ffffff" textLength="6.27" lengthAdjust="spacingAndGlyphs" stroke="#000" stroke-width="0.12" transform="translate(1096.00,763.00) rotate(-90)">/</text>
<text x="-40.66" y="0.00" font-size="19.79" fill="#ffffff" textLength="82.35" lengthAdjust="spacingAndGlyphs" stroke="#000" stroke-width="0.12" transform="translate(1096.00,763.00) rotate(-90)">AFFECTS</text>
<text x="47.64" y="0.00" font-size="19.79" fill="#ffffff" textLength="81.55" lengthAdjust="spacingAndGlyphs" stroke="#000" stroke-width="0.12" transform="translate(1096.00,763.00) rotate(-90)">SESSION</text>
<text x="-18.90" y="3.56" font-size="13.33" fill="#ffffff" textLength="37.79" lengthAdjust="spacingAndGlyphs" stroke="#000" stroke-width="0.12" transform="translate(128.50,926.8) rotate(-60)">15:00</text>
<text x="-18.90" y="3.56" font-size="13.33" fill="#ffffff" textLength="37.79" lengthAdjust="spacingAndGlyphs" stroke="#000" stroke-width="0.12" transform="translate(236.50,926.8) rotate(-60)">16:00</text>
<text x="-18.90" y="3.56" font-size="13.33" fill="#ffffff" textLength="37.79" lengthAdjust="spacingAndGlyphs" stroke="#000" stroke-width="0.12" transform="translate(344.50,926.8) rotate(-60)">17:00</text>
<text x="-18.90" y="3.56" font-size="13.33" fill="#ffffff" textLength="37.79" lengthAdjust="spacingAndGlyphs" stroke="#000" stroke-width="0.12" transform="translate(452.50,926.8) rotate(-60)">18:00</text>
<text x="-18.90" y="3.56" font-size="13.33" fill="#ffffff" textLength="37.79" lengthAdjust="spacingAndGlyphs" stroke="#000" stroke-width="0.12" transform="translate(560.50,926.8) rotate(-60)">19:00</text>
<text x="-18.90" y="3.56" font-size="13.33" fill="#ffffff" textLength="37.79" lengthAdjust="spacingAndGlyphs" stroke="#000" stroke-width="0.12" transform="translate(668.50,926.8) rotate(-60)">20:00</text>
<text x="-18.90" y="3.56" font-size="13.33" fill="#ffffff" textLength="37.79" lengthAdjust="spacingAndGlyphs" stroke="#000" stroke-width="0.12" transform="translate(776.50,926.8) rotate(-60)">21:00</text>
<text x="-18.90" y="3.56" font-size="13.33" fill="#ffffff" textLength="37.79" lengthAdjust="spacingAndGlyphs" stroke="#000" stroke-width="0.12" transform="translate(884.50,926.8) rotate(-60)">22:00</text>
</svg>
</body></html>
